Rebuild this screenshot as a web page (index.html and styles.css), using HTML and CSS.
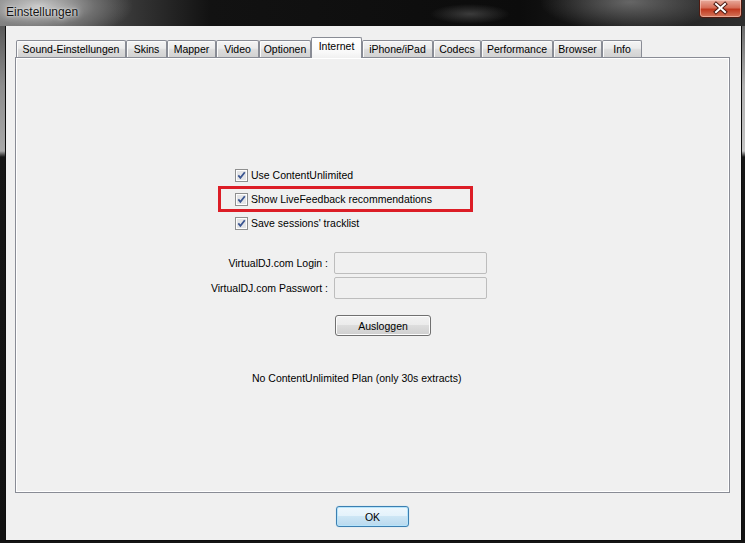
FILE: index.html
```html
<!DOCTYPE html>
<html lang="de">

<head>
    <meta charset="UTF-8">
    <meta name="viewport" content="width=device-width, initial-scale=1.0">
    <title>Einstellungen</title>
    <link rel="stylesheet" href="styles.css">
</head>

<body>
    <div class="window">
        <div class="titlebar">
            <span class="title">Einstellungen</span>
            <div class="close">
                <svg width="41" height="16" viewBox="0 0 41 16">
                    <path d="M16 4 L25 12 M25 4 L16 12" stroke="#4b1a12" stroke-width="4" stroke-linecap="square" fill="none" />
                    <path d="M16 4 L25 12 M25 4 L16 12" stroke="#ffffff" stroke-width="2" stroke-linecap="square" fill="none" />
                </svg>
            </div>
        </div>
        <div class="frame">
            <div class="edge left"></div>
            <div class="client">
                <div class="tabs">
                    <div class="tab w-sound">Sound-Einstellungen</div>
                    <div class="tab w-skins">Skins</div>
                    <div class="tab w-mapper">Mapper</div>
                    <div class="tab w-video">Video</div>
                    <div class="tab w-optionen">Optionen</div>
                    <div class="tab w-internet active">Internet</div>
                    <div class="tab w-iphone">iPhone/iPad</div>
                    <div class="tab w-codecs">Codecs</div>
                    <div class="tab w-perf">Performance</div>
                    <div class="tab w-browser">Browser</div>
                    <div class="tab w-info">Info</div>
                </div>
                <div class="panel">
                    <div class="options">
                        <label class="option">
                            <svg class="check" width="13" height="13" viewBox="0 0 13 13">
                                <rect x="0.5" y="0.5" width="12" height="12" fill="#fdfdfd" stroke="#8e8f8f" />
                                <rect x="2" y="2" width="9" height="9" fill="#e4e5e7" />
                                <path d="M3.3 6.4 L5.4 8.8 L9.8 3.3" stroke="#3a5591" stroke-width="1.8" fill="none" />
                            </svg>
                            Use ContentUnlimited
                        </label>
                        <label class="option marked">
                            <svg class="check" width="13" height="13" viewBox="0 0 13 13">
                                <rect x="0.5" y="0.5" width="12" height="12" fill="#fdfdfd" stroke="#8e8f8f" />
                                <rect x="2" y="2" width="9" height="9" fill="#e4e5e7" />
                                <path d="M3.3 6.4 L5.4 8.8 L9.8 3.3" stroke="#3a5591" stroke-width="1.8" fill="none" />
                            </svg>
                            Show LiveFeedback recommendations
                        </label>
                        <label class="option">
                            <svg class="check" width="13" height="13" viewBox="0 0 13 13">
                                <rect x="0.5" y="0.5" width="12" height="12" fill="#fdfdfd" stroke="#8e8f8f" />
                                <rect x="2" y="2" width="9" height="9" fill="#e4e5e7" />
                                <path d="M3.3 6.4 L5.4 8.8 L9.8 3.3" stroke="#3a5591" stroke-width="1.8" fill="none" />
                            </svg>
                            Save sessions' tracklist
                        </label>
                    </div>
                    <div class="account">
                        <span class="field-label">VirtualDJ.com Login :</span>
                        <span class="input"></span>
                        <span class="field-label">VirtualDJ.com Passwort :</span>
                        <span class="input"></span>
                        <button class="btn logout">Ausloggen</button>
                    </div>
                    <p class="plan">No ContentUnlimited Plan (only 30s extracts)</p>
                </div>
                <div class="footer">
                    <button class="btn ok">OK</button>
                </div>
            </div>
            <div class="edge right"></div>
        </div>
    </div>
</body>

</html>
```

FILE: styles.css
```css
html,
body {
    margin: 0;
    height: 100%;
    overflow: hidden;
}

body {
    background: #141414;
    font-family: "Liberation Sans", Arial, sans-serif;
    font-size: 10.5px;
    color: #000;
}

.window {
    display: flex;
    flex-direction: column;
    width: 745px;
    height: 543px;
}

/* Titelleiste */

.titlebar {
    flex: none;
    height: 26px;
    display: flex;
    align-items: flex-start;
    background:
        radial-gradient(ellipse 95px 34px at 38px 6px, rgba(205, 205, 205, .95), rgba(140, 140, 140, .55) 60%, rgba(0, 0, 0, 0)),
        radial-gradient(ellipse 90px 30px at 630px 2px, rgba(120, 120, 120, .8), rgba(0, 0, 0, 0)),
        radial-gradient(ellipse 40px 10px at 470px 14px, rgba(90, 90, 90, .6), rgba(0, 0, 0, 0)),
        linear-gradient(90deg, #7a7a7a 0, #3c3c3c 120px, #121212 210px, #0c0c0c 520px, #262626 680px, #2e2e2e 745px);
}

.title {
    margin: 5px 0 0 6px;
    font-size: 12px;
    line-height: 15px;
    color: #141414;
    text-shadow: 0 0 6px rgba(255, 255, 255, .9), 0 0 2px rgba(255, 255, 255, .8);
}

.close {
    margin-left: auto;
    margin-right: 3px;
    width: 43px;
    height: 18px;
    box-sizing: border-box;
    border: 1px solid #4e1a10;
    border-top: none;
    border-radius: 0 0 4px 4px;
    background: linear-gradient(#e8ab9c 0, #d66e58 45%, #c0391f 55%, #d4765b 100%);
    box-shadow: inset 0 0 0 1px rgba(255, 220, 210, .5);
}

.close svg {
    display: block;
}

/* Rahmen */

.frame {
    flex: 1;
    min-height: 0;
    display: flex;
    padding-bottom: 2px;
}

.edge {
    flex: none;
}

.edge.left {
    width: 5px;
    background: linear-gradient(#5a5a5a 0, #8d8d8d 60px, #a8a8a8 125px, #161616 131px, #111 100%);
}

.edge.right {
    width: 3px;
    background: linear-gradient(#6a6a6a 0, #b0b0b0 60px, #c4c4c4 125px, #161616 131px, #111 100%);
}

.client {
    flex: 1;
    display: flex;
    flex-direction: column;
    background: #f0f0f0;
    border: 1px solid #0d0d0d;
    border-top: none;
    padding: 11px 11px 0 9px;
}

/* Registerkarten */

.tabs {
    flex: none;
    height: 20px;
    display: flex;
    align-items: flex-end;
    padding-left: 1px;
}

.tab {
    box-sizing: border-box;
    height: 17px;
    border: 1px solid #898c95;
    border-bottom: none;
    border-radius: 2px 2px 0 0;
    background: linear-gradient(#f4f4f4, #ebebeb 45%, #dcdcdc 55%, #d2d2d2);
    box-shadow: inset 1px 1px 0 #fbfbfb;
    text-align: center;
    line-height: 16px;
    white-space: nowrap;
}

.tab.active {
    position: relative;
    z-index: 1;
    height: 21px;
    margin-bottom: -1px;
    background: linear-gradient(#ffffff, #f9f9f9 70%, #f0f0f0);
    box-shadow: none;
    line-height: 17px;
}

.w-sound { width: 110px; }
.w-skins { width: 41px; }
.w-mapper { width: 49px; }
.w-video { width: 43px; }
.w-optionen { width: 52px; }
.w-internet { width: 51px; }
.w-iphone { width: 71px; }
.w-codecs { width: 48px; }
.w-perf { width: 72px; }
.w-browser { width: 49px; }
.w-info { width: 40px; }

.panel {
    flex: none;
    height: 436px;
    box-sizing: border-box;
    border: 1px solid #898c95;
    box-shadow: inset 1px 1px 0 #fff, inset -1px -1px 0 #fff;
    padding-top: 105px;
}

/* Checkboxen */

.options {
    padding-left: 219px;
}

.option {
    display: flex;
    align-items: center;
    gap: 3px;
    height: 24px;
}

.check {
    flex: none;
}

.option.marked {
    position: relative;
}

.option.marked::after {
    content: "";
    position: absolute;
    top: -1px;
    left: -17px;
    width: 255px;
    height: 26px;
    box-sizing: border-box;
    border: 3px solid #dc1d26;
}

/* Login */

.account {
    display: grid;
    grid-template-columns: 312px 153px;
    column-gap: 6px;
    row-gap: 3px;
    align-items: center;
    margin-top: 17px;
}

.field-label {
    text-align: right;
    white-space: nowrap;
}

.input {
    height: 22px;
    box-sizing: border-box;
    border: 1px solid #bdbdbd;
    border-radius: 2px;
    background: #f0f0f0;
}

.btn {
    font: inherit;
    color: #000;
    padding: 0;
    border: 1px solid #707070;
    border-radius: 3px;
    background: linear-gradient(#f2f2f2, #ebebeb 50%, #dddddd 50%, #cfcfcf);
    box-shadow: inset 0 0 0 1px #fcfcfc;
}

.logout {
    grid-column: 2;
    justify-self: start;
    width: 96px;
    height: 21px;
    margin: 13px 0 0 1px;
}

.plan {
    margin: 35px 0 0 236px;
    line-height: 14px;
}

/* Fußleiste */

.footer {
    display: flex;
    justify-content: center;
    padding-top: 13px;
}

.ok {
    width: 73px;
    height: 21px;
    border-color: #3c7fb1;
    background: linear-gradient(#eef7fd, #e3f2fb 50%, #cde6f5 50%, #b9d9ee);
    box-shadow: inset 0 0 0 1px #b6e4fb, 0 0 1px #7fc7ee;
}
```
